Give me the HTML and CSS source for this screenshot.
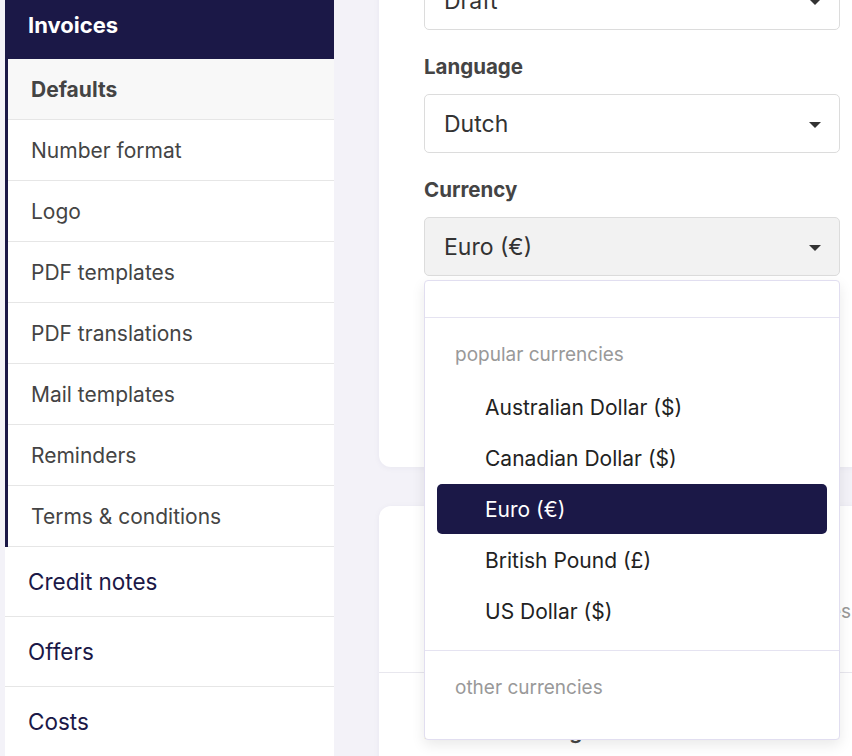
FILE: index.html
```html
<!DOCTYPE html>
<html lang="en">
<head>
<meta charset="utf-8">
<title>Invoice defaults</title>
<link rel="stylesheet" href="styles.css">
</head>
<body>
<div class="page">
  <nav class="sidebar">
    <div class="group">
      <div class="group-head">Invoices</div>
      <ul class="sub">
        <li class="sub-item active">Defaults</li>
        <li class="sub-item">Number format</li>
        <li class="sub-item">Logo</li>
        <li class="sub-item">PDF templates</li>
        <li class="sub-item">PDF translations</li>
        <li class="sub-item">Mail templates</li>
        <li class="sub-item">Reminders</li>
        <li class="sub-item">Terms &amp; conditions</li>
      </ul>
    </div>
    <div class="nav-item">Credit notes</div>
    <div class="nav-item">Offers</div>
    <div class="nav-item">Costs</div>
  </nav>

  <main class="main">
    <section class="card card-top">
      <div class="field">
        <label class="field-label">Status</label>
        <div class="select"><span>Draft</span><i class="caret"></i></div>
      </div>
      <div class="field">
        <label class="field-label">Language</label>
        <div class="select"><span>Dutch</span><i class="caret"></i></div>
      </div>
      <div class="field">
        <label class="field-label">Currency</label>
        <div class="select open"><span>Euro (€)</span><i class="caret"></i>
          <div class="dropdown">
            <div class="search"></div>
            <div class="opt-group">
              <div class="group-label">popular currencies</div>
              <div class="option">Australian Dollar ($)</div>
              <div class="option">Canadian Dollar ($)</div>
              <div class="option selected">Euro (€)</div>
              <div class="option">British Pound (£)</div>
              <div class="option">US Dollar ($)</div>
            </div>
            <div class="opt-group">
              <div class="group-label">other currencies</div>
            </div>
          </div>
        </div>
      </div>
      <div class="field">
        <label class="field-label">Payment term</label>
        <div class="select"><span>30 days</span><i class="caret"></i></div>
      </div>
    </section>

    <section class="card card-second">
      <div class="card-section head">
        <h2 class="card-title">Invoice reminders</h2>
        <p class="card-desc">Send reminders for overdue invoices</p>
      </div>
      <div class="card-section">
        <div class="field-label">Default sending time</div>
      </div>
    </section>
  </main>
</div>
</body>
</html>
```

FILE: styles.css
```css
* { box-sizing: border-box; }

html, body {
  margin: 0;
  height: 756px;
  overflow: hidden;
}

body {
  background: #f3f2f8;
  font-family: Inter, "Noto Sans", "Liberation Sans", sans-serif;
  color: #333;
}

.page {
  display: flex;
  gap: 45px;
  padding-left: 5px;
  align-items: flex-start;
}

/* Sidebar */
.sidebar {
  width: 329px;
  flex: none;
  background: #fff;
}

.group-head {
  height: 59px;
  padding: 0 0 9px 23px;
  display: flex;
  align-items: center;
  background: #1b1847;
  color: #fff;
  font-weight: 700;
  font-size: 22px;
}

.sub {
  list-style: none;
  margin: 0;
  padding: 0;
  border-left: 3px solid #1b1847;
}

.sub-item {
  height: 61px;
  padding-left: 23px;
  display: flex;
  align-items: center;
  border-bottom: 1px solid #e6e6e6;
  font-size: 21px;
  color: #444;
}

.sub-item.active {
  background: #f8f8f8;
  font-weight: 700;
}

.nav-item {
  height: 70px;
  padding-left: 23px;
  display: flex;
  align-items: center;
  border-bottom: 1px solid #e6e6e6;
  font-size: 22.5px;
  color: #1b1847;
}

/* Main */
.main {
  width: 506px;
  flex: none;
  margin-top: -77px;
}

.card {
  background: #fff;
  border-radius: 12px;
  box-shadow: 0 1px 6px rgba(40, 30, 90, 0.05);
}

.card-top {
  padding: 10px 45px 68px;
}

.field {
  margin-bottom: 26px;
}

.field:last-child {
  margin-bottom: 0;
}

.field-label {
  display: block;
  font-size: 20.5px;
  line-height: 22px;
  font-weight: 700;
  color: #444;
  margin-bottom: 16px;
}

.select {
  position: relative;
  height: 59px;
  border: 1px solid #dcdcdc;
  border-radius: 5px;
  padding: 0 19px;
  display: flex;
  align-items: center;
  font-size: 23px;
  color: #333;
  background: #fff;
}

.select.open {
  background: #f2f2f2;
}

.caret {
  position: absolute;
  right: 18px;
  top: 50%;
  margin-top: -2px;
  width: 0;
  height: 0;
  border-left: 6px solid transparent;
  border-right: 6px solid transparent;
  border-top: 6px solid #333;
}

/* Dropdown */
.dropdown {
  position: absolute;
  left: -1px;
  right: -1px;
  top: calc(100% + 5px);
  height: 460px;
  background: #fff;
  border: 1px solid #e1def0;
  border-radius: 4px;
  box-shadow: 0 5px 14px rgba(0, 0, 0, 0.09);
  z-index: 10;
  overflow: hidden;
}

.search {
  height: 37px;
  border-bottom: 1px solid #e5e3f1;
}

.opt-group {
  padding: 25px 0 13px;
}

.opt-group + .opt-group {
  border-top: 1px solid #e5e3f1;
}

.group-label {
  padding-left: 30px;
  font-size: 19px;
  line-height: 24px;
  color: #999;
  margin-bottom: 15px;
}

.option {
  height: 50px;
  margin: 0 12px 1px;
  padding-left: 48px;
  display: flex;
  align-items: center;
  border-radius: 5px;
  font-size: 21px;
  color: #222;
}

.option.selected {
  background: #1b1847;
  color: #fff;
}

/* Second card */
.card-second {
  margin-top: 39px;
  height: 300px;
}

.card-section {
  padding: 48px 45px 0;
}

.card-section.head {
  height: 167px;
  padding-top: 40px;
  border-bottom: 1px solid #e8e7ee;
}

.card-title {
  margin: 0 0 30px;
  font-size: 21px;
  line-height: 24px;
  font-weight: 700;
  color: #333;
}

.card-desc {
  margin: 0;
  width: 427px;
  text-align: right;
  font-size: 19px;
  line-height: 24px;
  color: #999;
  white-space: nowrap;
}
```
